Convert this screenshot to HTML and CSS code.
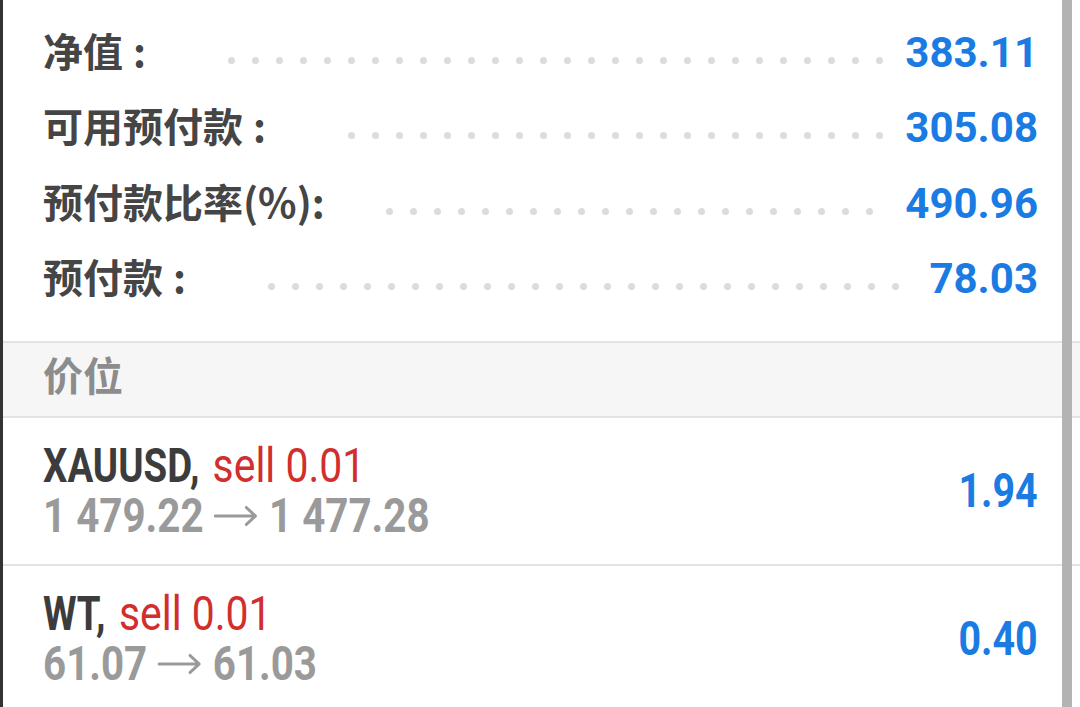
FILE: index.html
```html
<!DOCTYPE html>
<html lang="zh-CN">
<head>
<meta charset="utf-8">
<title>交易</title>
<link rel="stylesheet" href="styles.css">
</head>
<body>
<div class="screen">
  <section class="summary">
    <div class="row"><span class="label">净值<span class="colon">:</span></span><span class="dots"><i></i><i></i><i></i><i></i><i></i><i></i><i></i><i></i><i></i><i></i><i></i><i></i><i></i><i></i><i></i><i></i><i></i><i></i><i></i><i></i><i></i><i></i><i></i><i></i><i></i><i></i><i></i><i></i><i></i><i></i></span><span class="val">383.11</span></div>
    <div class="row"><span class="label">可用预付款<span class="colon">:</span></span><span class="dots"><i></i><i></i><i></i><i></i><i></i><i></i><i></i><i></i><i></i><i></i><i></i><i></i><i></i><i></i><i></i><i></i><i></i><i></i><i></i><i></i><i></i><i></i><i></i><i></i><i></i><i></i><i></i><i></i><i></i><i></i></span><span class="val">305.08</span></div>
    <div class="row"><span class="label">预付款比率(%):</span><span class="dots"><i></i><i></i><i></i><i></i><i></i><i></i><i></i><i></i><i></i><i></i><i></i><i></i><i></i><i></i><i></i><i></i><i></i><i></i><i></i><i></i><i></i><i></i><i></i><i></i><i></i><i></i><i></i><i></i><i></i><i></i></span><span class="val">490.96</span></div>
    <div class="row"><span class="label">预付款<span class="colon">:</span></span><span class="dots"><i></i><i></i><i></i><i></i><i></i><i></i><i></i><i></i><i></i><i></i><i></i><i></i><i></i><i></i><i></i><i></i><i></i><i></i><i></i><i></i><i></i><i></i><i></i><i></i><i></i><i></i><i></i><i></i><i></i><i></i></span><span class="val">78.03</span></div>
  </section>
  <div class="section-head">价位</div>
  <div class="pos">
    <div class="pos-info">
      <div class="line1 cond"><span class="sym">XAUUSD,</span><span class="sell">sell 0.01</span></div>
      <div class="line2 cond2">1 479.22<svg class="arrow" viewBox="0 0 54 24" preserveAspectRatio="none"><path d="M2 12H50M39 3.5L50 12L39 20.5" fill="none" stroke="#9a9a9a" stroke-width="3.2" stroke-linecap="round" stroke-linejoin="round"/></svg>1 477.28</div>
    </div>
    <div class="pos-val"><span class="cond-r">1.94</span></div>
  </div>
  <div class="pos">
    <div class="pos-info">
      <div class="line1 cond"><span class="sym">WT,</span><span class="sell">sell 0.01</span></div>
      <div class="line2 cond2">61.07<svg class="arrow" viewBox="0 0 54 24" preserveAspectRatio="none"><path d="M2 12H50M39 3.5L50 12L39 20.5" fill="none" stroke="#9a9a9a" stroke-width="3.2" stroke-linecap="round" stroke-linejoin="round"/></svg>61.03</div>
    </div>
    <div class="pos-val"><span class="cond-r">0.40</span></div>
  </div>
  <div class="scrollbar"></div>
</div>
</body>
</html>
```
FILE: styles.css
```css
html, body {
  margin: 0;
  padding: 0;
  background: #ffffff;
}
body {
  width: 1080px;
  height: 707px;
  overflow: hidden;
  font-family: Roboto, "Noto Sans CJK SC", sans-serif;
}
.screen {
  position: relative;
  height: 707px;
  border-left: 3px solid #333333;
  box-sizing: border-box;
  background: #ffffff;
}
.summary {
  padding: 13px 42px 26px 40px;
  height: 302px;
  box-sizing: content-box;
}
.row {
  display: flex;
  align-items: baseline;
  height: 75.3px;
}
.label {
  font-family: "Noto Sans CJK SC", sans-serif;
  font-weight: 700;
  font-size: 40px;
  line-height: 75px;
  color: #454545;
  white-space: nowrap;
}
.colon {
  margin: 0 21px 0 10px;
}
.dots {
  flex: 1;
  align-self: flex-start;
  display: flex;
  flex-wrap: wrap;
  column-gap: 17px;
  row-gap: 0;
  height: 7px;
  overflow: hidden;
  margin: 44px 20px 0 61px;
}
.dots i {
  flex: none;
  width: 7px;
  height: 7px;
  border-radius: 50%;
  background: #dcdcdc;
}
.val {
  font-family: Roboto, sans-serif;
  font-weight: 700;
  font-size: 42px;
  line-height: 75px;
  color: #1a7be3;
}
.section-head {
  border-top: 2px solid #e3e3e3;
  border-bottom: 2px solid #e3e3e3;
  background: #f6f6f6;
  height: 73px;
  box-sizing: content-box;
  padding-left: 40px;
  font-family: "Noto Sans CJK SC", sans-serif;
  font-weight: 700;
  font-size: 40px;
  line-height: 63px;
  color: #8c8c8c;
}
.pos {
  display: flex;
  align-items: center;
  justify-content: space-between;
  height: 146px;
  padding: 0 42px 0 40px;
  border-bottom: 2px solid #e3e3e3;
}
.pos-info {
  display: flex;
  flex-direction: column;
}
.cond, .cond2 {
  font-family: Roboto, sans-serif;
  font-size: 48px;
  line-height: 50px;
  white-space: nowrap;
  transform-origin: left center;
}
.cond {
  transform: scaleX(0.8);
}
.cond2 {
  transform: scaleX(0.84);
}
.sym {
  font-weight: 700;
  color: #3c3c3c;
}
.sell {
  display: inline-block;
  margin-left: 17px;
  font-weight: 400;
  color: #d12e2e;
  transform: scaleX(1.065);
  transform-origin: left center;
}
.line2 {
  font-weight: 700;
  color: #9a9a9a;
}
.arrow {
  width: 54px;
  height: 24px;
  margin: 0 12px;
  vertical-align: 4px;
}
.pos-val {
  font-family: Roboto, sans-serif;
  font-weight: 700;
  font-size: 48px;
  line-height: 50px;
  color: #1a7be3;
}
.cond-r {
  display: inline-block;
  transform: scaleX(0.82);
  transform-origin: right center;
}
.scrollbar {
  position: absolute;
  top: 0;
  bottom: 0;
  right: 8px;
  width: 10px;
  background: #b3b3b3;
}
```
